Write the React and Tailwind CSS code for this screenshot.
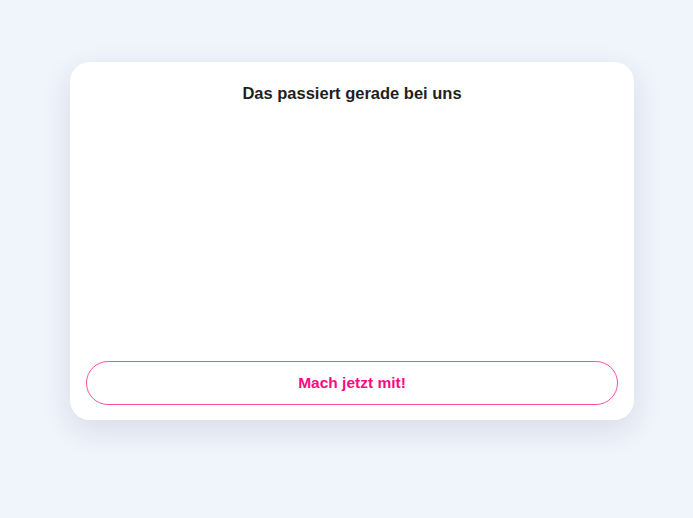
import React from 'react';

const App = () => {
  return (
    <div className="min-h-screen bg-[#f0f4fb] flex items-start justify-start pl-[70px] pt-[62px]" style={{ fontFamily: '"Liberation Sans", Arial, sans-serif' }}>
      <div className="w-[564px] h-[358px] bg-white rounded-[20px] shadow-[0_10px_30px_rgba(30,50,90,0.12)] flex flex-col px-4 pt-[21px] pb-[15px]">
        <h2 className="text-center text-[16.5px] font-bold text-[#1f1f1f] leading-[20px]">
          Das passiert gerade bei uns
        </h2>
        <div className="flex-1" />
        <button className="w-full h-[44px] rounded-full border border-[#ff4fa8] text-[#ff0a82] text-[15.5px] font-bold">
          Mach jetzt mit!
        </button>
      </div>
    </div>
  );
};

export default App;
